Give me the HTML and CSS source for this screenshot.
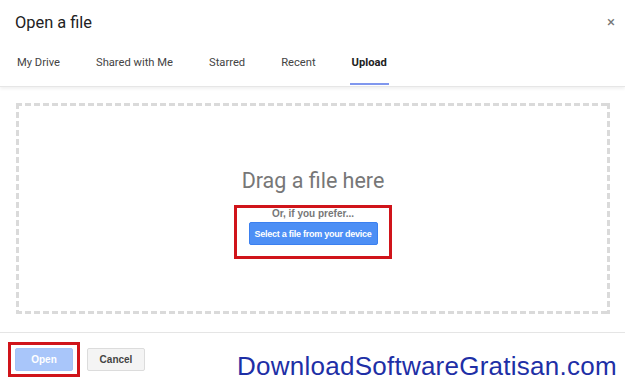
FILE: index.html
```html
<!DOCTYPE html>
<html lang="en">
<head>
    <meta charset="UTF-8">
    <title>Open a file</title>
    <link rel="stylesheet" href="styles.css">
</head>
<body>
    <div class="dialog">
        <div class="header">
            <h1 class="title">Open a file</h1>
            <span class="close">&times;</span>
        </div>
        <div class="tabs">
            <span class="tab">My Drive</span>
            <span class="tab">Shared with Me</span>
            <span class="tab">Starred</span>
            <span class="tab">Recent</span>
            <span class="tab active">Upload</span>
        </div>
        <div class="content">
            <div class="dropzone">
                <div class="drag-text">Drag a file here</div>
                <div class="highlight">
                    <div class="prefer">Or, if you prefer...</div>
                    <button class="btn-select">Select a file from your device</button>
                </div>
            </div>
        </div>
        <div class="footer">
            <div class="highlight small">
                <button class="btn-open">Open</button>
            </div>
            <button class="btn-cancel">Cancel</button>
            <div class="watermark">DownloadSoftwareGratisan.com</div>
        </div>
    </div>
</body>
</html>
```
FILE: styles.css
```css
body {
    margin: 0;
    background: #fff;
    font-family: Roboto, "Liberation Sans", Arial, sans-serif;
    color: #222;
}
.dialog {
    position: relative;
    width: 625px;
    height: 386px;
}
.header {
    display: flex;
    justify-content: space-between;
    align-items: center;
    height: 44px;
    padding: 0 10px 0 15px;
}
.title {
    margin: 0;
    font-size: 16.4px;
    font-weight: normal;
    color: #222;
}
.close {
    font-size: 15px;
    color: #777;
}
.tabs {
    display: flex;
    gap: 32px;
    padding: 0 0 0 15px;
    height: 42px;
    border-bottom: 1px solid #e6e6e6;
    box-shadow: 0 2px 3px rgba(0, 0, 0, 0.06);
}
.tab {
    padding: 12px 2px 0;
    font-size: 11.2px;
    color: #444;
    box-sizing: border-box;
    height: 40px;
}
.tab.active {
    font-weight: bold;
    color: #222;
    border-bottom: 2px solid #8097ee;
    height: 41px;
}
.content {
    padding: 16px 15px 18px 16px;
}
.dropzone {
    height: 211px;
    display: flex;
    flex-direction: column;
    align-items: center;
    padding-top: 65px;
    box-sizing: border-box;
    background:
        repeating-linear-gradient(90deg, #dadada 0 6px, transparent 6px 9px) top / 100% 3px no-repeat,
        repeating-linear-gradient(90deg, #dadada 0 6px, transparent 6px 9px) bottom / 100% 3px no-repeat,
        repeating-linear-gradient(180deg, #dadada 0 6px, transparent 6px 9px) left / 3px 100% no-repeat,
        repeating-linear-gradient(180deg, #dadada 0 6px, transparent 6px 9px) right / 3px 100% no-repeat;
}
.drag-text {
    font-size: 21.5px;
    color: #777;
}
.highlight {
    margin-top: 12px;
    border: 3px solid #d0141a;
    width: 152px;
    height: 48px;
    display: flex;
    flex-direction: column;
    align-items: center;
}
.prefer {
    font-family: "Liberation Sans", Arial, sans-serif;
    font-size: 10px;
    font-weight: bold;
    color: #777;
    margin-top: 0;
}
.btn-select {
    margin-top: 3px;
    width: 129px;
    height: 23px;
    padding: 0;
    border: 1px solid #3b80f0;
    background: #4d8ff5;
    color: #fff;
    font-family: "Liberation Sans", Arial, sans-serif;
    font-size: 9px;
    font-weight: bold;
    letter-spacing: -0.25px;
    white-space: nowrap;
    border-radius: 2px;
}
.footer {
    display: flex;
    align-items: center;
    gap: 8px;
    height: 52px;
    padding-left: 8px;
    border-top: 1px solid #e5e5e5;
}
.highlight.small {
    margin: 0;
    width: 66px;
    height: 29px;
    justify-content: center;
}
.btn-open,
.btn-cancel {
    height: 23px;
    padding: 0;
    border-radius: 2px;
    font-family: "Liberation Sans", Arial, sans-serif;
    font-size: 10px;
    font-weight: bold;
}
.btn-open {
    width: 58px;
    border: 1px solid #a4c2f6;
    background: #a9c6fa;
    color: #fff;
}
.btn-cancel {
    width: 58px;
    border: 1px solid #dcdcdc;
    background: #f4f4f4;
    color: #444;
    margin-left: -1px;
}
.watermark {
    position: absolute;
    left: 237px;
    bottom: 4px;
    font-family: "Liberation Sans", Arial, sans-serif;
    font-size: 26px;
    color: #1e2fa6;
    letter-spacing: 0.25px;
}
```
